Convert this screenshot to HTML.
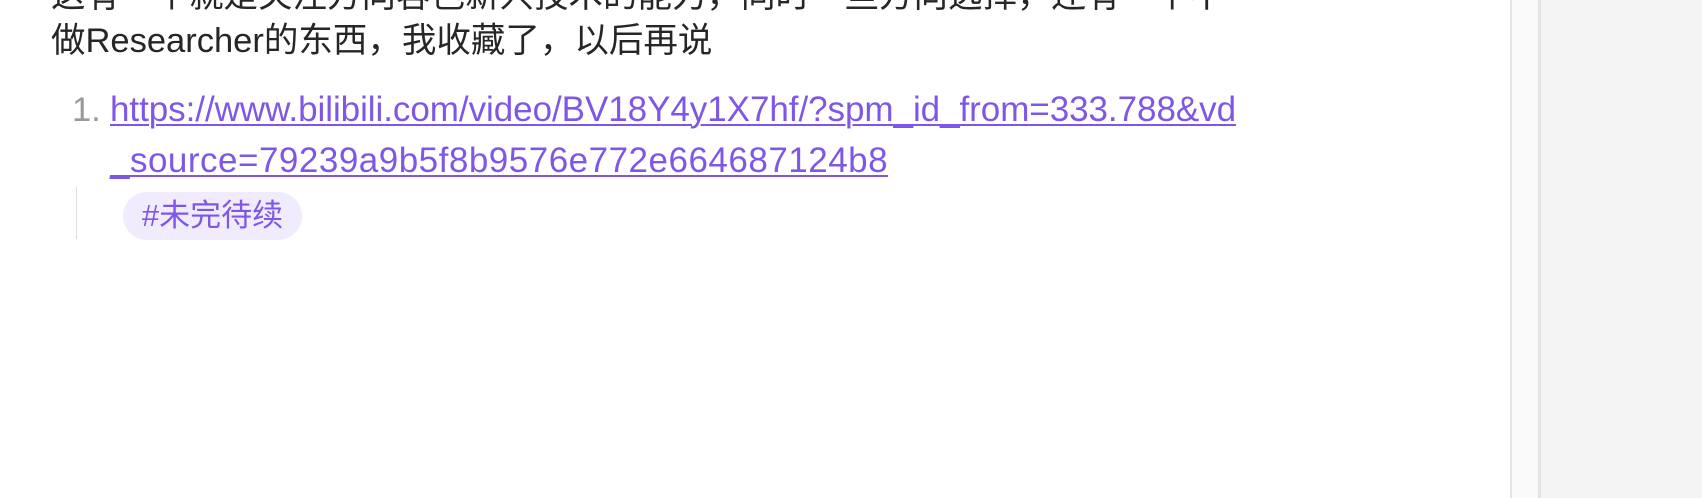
<!DOCTYPE html>
<html><head><meta charset="utf-8"><style>
html,body{margin:0;padding:0;width:1702px;height:498px;overflow:hidden;background:#fff;font-family:"Liberation Sans","Noto Sans CJK SC",sans-serif;color:#262626;}
.t{position:absolute;white-space:nowrap;font-size:34.5px;}
a{color:#7e57e8;text-decoration:underline;text-decoration-thickness:2px;text-underline-offset:3px;font-size:35px;letter-spacing:-0.05px;}
.tag{position:absolute;left:123px;top:192px;width:179px;height:48px;border-radius:24px;background:#f0ebfd;color:#7e57e8;font-size:31px;line-height:48px;text-align:center;}
</style></head><body>
<div class="t" style="left:51px;top:-30px;line-height:52px">这有一个就是关注方向容色新兴技术的能力，同时一些方向选择，还有一个不</div>
<div class="t" style="left:51px;top:15px;line-height:52px">做Researcher的东西，我收藏了，以后再说</div>
<div class="t" style="left:72px;top:84px;line-height:52px;color:#999">1.</div>
<div class="t" style="left:110px;top:84px;line-height:52px"><a>https://www.bilibili.com/video/BV18Y4y1X7hf/?spm_id_from=333.788&amp;vd</a></div>
<div class="t" style="left:110px;top:135px;line-height:52px"><a style="letter-spacing:0.5px">_source=79239a9b5f8b9576e772e664687124b8</a></div>
<div style="position:absolute;left:76px;top:187px;width:1px;height:52px;background:#ddd"></div>
<div class="tag">#未完待续</div>
<div style="position:absolute;left:1510px;top:0;width:2px;height:498px;background:#e4e4e4"></div>
<div style="position:absolute;left:1512px;top:0;width:26px;height:498px;background:#f9f9f9"></div>
<div style="position:absolute;left:1538px;top:0;width:3px;height:498px;background:#e4e4e4"></div>
<div style="position:absolute;left:1541px;top:0;width:161px;height:498px;background:#f4f4f4"></div>
</body></html>
